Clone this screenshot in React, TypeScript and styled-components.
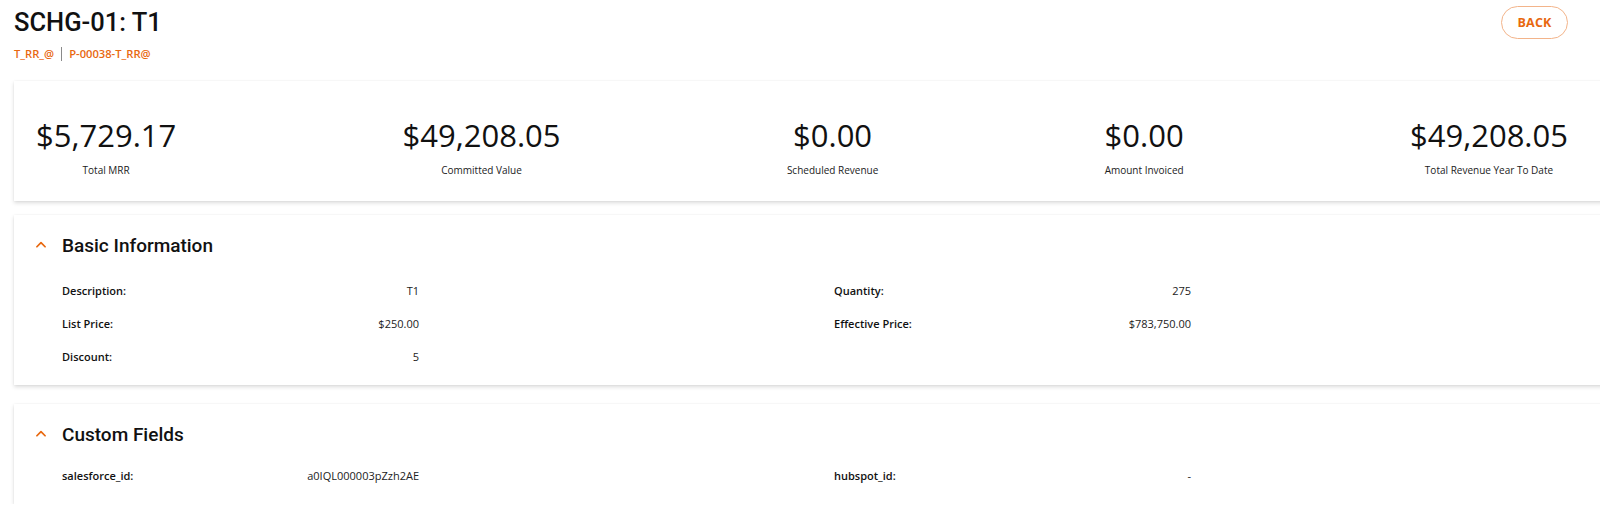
import React from 'react';
import styled, { createGlobalStyle } from 'styled-components';

const orange = '#e8680f';

const GlobalStyle = createGlobalStyle`
  html, body {
    margin: 0;
    padding: 0;
    background: #ffffff;
    overflow: hidden;
  }
  body {
    font-family: 'Open Sans', 'Noto Sans', sans-serif;
    color: #111111;
  }
`;

const Page = styled.div`
  padding: 8px 0 0 14px;
  display: flex;
  flex-direction: column;
`;

const Header = styled.header`
  display: flex;
  justify-content: space-between;
  align-items: flex-start;
  padding-right: 32px;
  margin-top: -3px;
`;

const TitleBlock = styled.div`
  display: flex;
  flex-direction: column;
  gap: 7px;
`;

const Title = styled.h1`
  margin: 0;
  font-family: Roboto, 'Noto Sans', sans-serif;
  font-weight: 500;
  font-size: 25.5px;
  line-height: 34px;
  color: #111111;
`;

const Crumbs = styled.div`
  display: flex;
  align-items: center;
  gap: 7px;
`;

const Crumb = styled.a`
  font-size: 11.2px;
  font-weight: 600;
  color: ${orange};
  text-decoration: none;
`;

const Divider = styled.span`
  width: 1px;
  height: 14px;
  background: #8a8a8a;
`;

const BackButton = styled.button`
  margin-top: 1px;
  width: 67px;
  height: 33px;
  border-radius: 17px;
  border: 1px solid #f3b48a;
  background: #ffffff;
  color: ${orange};
  font-family: 'Open Sans', sans-serif;
  font-weight: 700;
  font-size: 12.5px;
  letter-spacing: 0.2px;
  cursor: pointer;
`;

const Card = styled.section<{ $top?: number }>`
  margin-top: ${({ $top }) => $top ?? 14}px;
  margin-right: -20px;
  background: #ffffff;
  box-shadow: 0 2px 4px rgba(0, 0, 0, 0.14), 0 0 2px rgba(0, 0, 0, 0.05);
`;

const Metrics = styled.div`
  display: flex;
  justify-content: space-between;
  align-items: flex-start;
  padding: 34px 52px 24px 22px;
`;

const Metric = styled.div`
  display: flex;
  flex-direction: column;
  align-items: center;
  gap: 8px;
`;

const MetricValue = styled.div`
  font-family: 'Open Sans', 'Noto Sans', sans-serif;
  font-size: 31px;
  line-height: 40px;
  font-weight: 400;
  color: #111111;
`;

const MetricLabel = styled.div`
  font-size: 10px;
  line-height: 14px;
  font-weight: 500;
  color: #222222;
`;

const Section = styled.div<{ $bottom?: number }>`
  padding: 18px 0 ${({ $bottom }) => $bottom ?? 16}px 0;
`;

const SectionHead = styled.div`
  display: flex;
  align-items: center;
  gap: 14px;
  padding-left: 20px;
  height: 24px;
`;

const SectionTitle = styled.h2`
  margin: 0;
  font-family: Roboto, 'Noto Sans', sans-serif;
  font-weight: 500;
  font-size: 19px;
  color: #111111;
`;

const FieldGrid = styled.div<{ $top?: number }>`
  display: grid;
  grid-template-columns: repeat(2, 357px);
  column-gap: 415px;
  row-gap: 15px;
  padding: ${({ $top }) => $top ?? 24}px 0 0 48px;
`;

const Field = styled.div`
  display: flex;
  justify-content: space-between;
  align-items: center;
  height: 18px;
  font-size: 11px;
`;

const FieldLabel = styled.span`
  font-weight: 600;
  color: #111111;
`;

const FieldValue = styled.span`
  font-weight: 400;
  color: #222222;
`;

const Chevron = () => (
  <svg width="14" height="14" viewBox="0 0 24 24" fill="none" stroke={orange} strokeWidth="3" strokeLinecap="round" strokeLinejoin="round">
    <path d="M5 15l7-7 7 7" />
  </svg>
);

const metrics = [
  { value: '$5,729.17', label: 'Total MRR' },
  { value: '$49,208.05', label: 'Committed Value' },
  { value: '$0.00', label: 'Scheduled Revenue' },
  { value: '$0.00', label: 'Amount Invoiced' },
  { value: '$49,208.05', label: 'Total Revenue Year To Date' },
];

type Pair = { label: string; value: string } | null;

const basicInfo: Pair[] = [
  { label: 'Description:', value: 'T1' },
  { label: 'Quantity:', value: '275' },
  { label: 'List Price:', value: '$250.00' },
  { label: 'Effective Price:', value: '$783,750.00' },
  { label: 'Discount:', value: '5' },
  null,
];

const customFields: Pair[] = [
  { label: 'salesforce_id:', value: 'a0IQL000003pZzh2AE' },
  { label: 'hubspot_id:', value: '-' },
];

const FieldSection: React.FC<{ title: string; fields: Pair[]; top?: number; bottom?: number }> = ({
  title,
  fields,
  top,
  bottom,
}) => (
  <Section $bottom={bottom}>
    <SectionHead>
      <Chevron />
      <SectionTitle>{title}</SectionTitle>
    </SectionHead>
    <FieldGrid $top={top}>
      {fields.map((f, i) =>
        f ? (
          <Field key={f.label}>
            <FieldLabel>{f.label}</FieldLabel>
            <FieldValue>{f.value}</FieldValue>
          </Field>
        ) : (
          <span key={i} />
        ),
      )}
    </FieldGrid>
  </Section>
);

export default function App() {
  return (
    <>
      <GlobalStyle />
      <Page>
        <Header>
          <TitleBlock>
            <Title>SCHG-01: T1</Title>
            <Crumbs>
              <Crumb>T_RR_@</Crumb>
              <Divider />
              <Crumb>P-00038-T_RR@</Crumb>
            </Crumbs>
          </TitleBlock>
          <BackButton>BACK</BackButton>
        </Header>

        <Card $top={20}>
          <Metrics>
            {metrics.map((m) => (
              <Metric key={m.label}>
                <MetricValue>{m.value}</MetricValue>
                <MetricLabel>{m.label}</MetricLabel>
              </Metric>
            ))}
          </Metrics>
        </Card>

        <Card>
          <FieldSection title="Basic Information" fields={basicInfo} bottom={20} />
        </Card>

        <Card $top={19}>
          <FieldSection title="Custom Fields" fields={customFields} top={20} bottom={20} />
        </Card>
      </Page>
    </>
  );
}
